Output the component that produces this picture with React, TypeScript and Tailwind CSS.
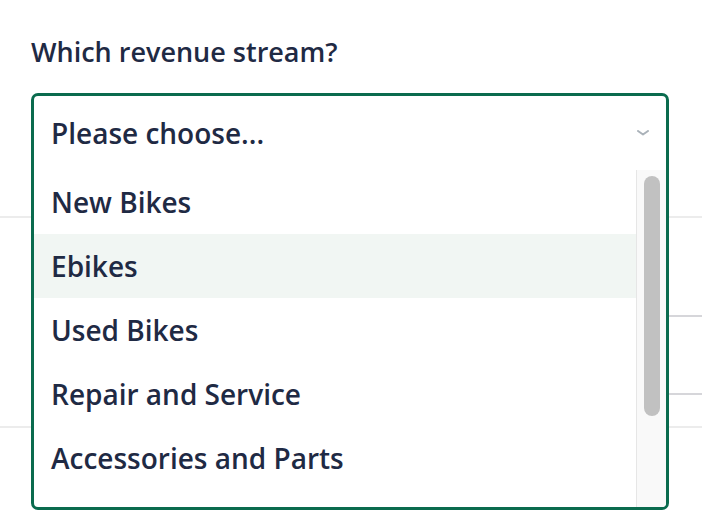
import { useState } from "react";

const options = [
  "New Bikes",
  "Ebikes",
  "Used Bikes",
  "Repair and Service",
  "Accessories and Parts",
];

const App: React.FC = () => {
  const [hovered, setHovered] = useState("Ebikes");

  return (
    <div className="relative w-[702px] h-[522px] overflow-hidden bg-white font-['Open_Sans',sans-serif] text-[#1f2a44]">
      {/* page content underneath the open dropdown */}
      <div className="pt-[35px] pl-[31px]">
        <h2 className="text-[27px] font-semibold leading-[34px]">Which revenue stream?</h2>
      </div>
      <div className="mt-[147px] h-[2px] bg-[#ececec]" />
      <div className="ml-[400px] mt-[97px] h-[2px] bg-[#d6d6da]" />
      <div className="ml-[400px] mt-[76px] h-[2px] bg-[#d6d6da]" />
      <div className="mt-[31px] h-[2px] bg-[#ececec]" />

      {/* open select */}
      <div className="absolute left-[31px] top-[93px] w-[638px] h-[417px] rounded-[7px] border-[3px] border-[#0a6b4e] bg-white flex flex-col overflow-hidden">
        <div className="h-[74px] shrink-0 flex items-center justify-between pl-[17px] pr-[17px]">
          <span className="text-[28px] font-semibold">Please choose...</span>
          <svg width="12" height="6" viewBox="0 0 12 6" className="mt-[-1px]">
            <path d="M1 1 L6 4.5 L11 1" fill="none" stroke="#aab2b9" strokeWidth="2" strokeLinecap="round" strokeLinejoin="round" />
          </svg>
        </div>
        <div className="flex flex-1 min-h-0">
          <ul className="flex-1 overflow-hidden">
            {options.map((option) => (
              <li
                key={option}
                onMouseEnter={() => setHovered(option)}
                className={`h-[64px] flex items-center pl-[17px] text-[28px] font-semibold cursor-pointer ${
                  hovered === option ? "bg-[#f1f6f3]" : "bg-white"
                }`}
              >
                {option}
              </li>
            ))}
          </ul>
          <div className="w-[30px] shrink-0 border-l border-[#e6e6e6] bg-[#f9f9f9] pt-[6px] pl-[7px]">
            <div className="w-[16px] h-[240px] rounded-full bg-[#c1c1c1]" />
          </div>
        </div>
      </div>
    </div>
  );
};

export default App;
